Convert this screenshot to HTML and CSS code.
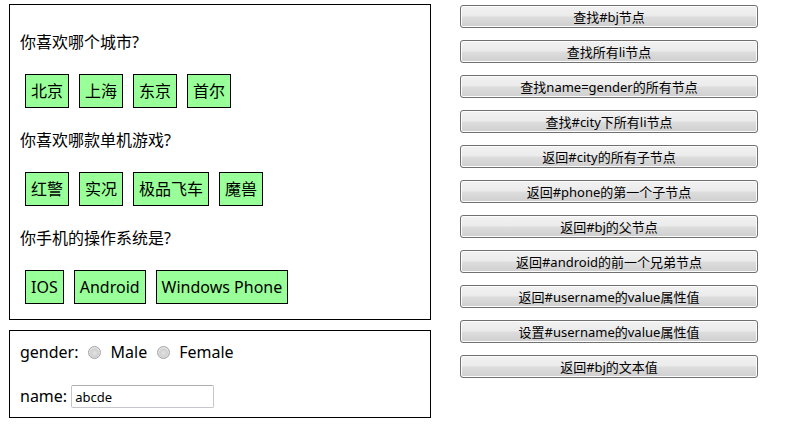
FILE: index.html
```html
<!DOCTYPE html>
<html lang="zh-CN">
<head>
<meta charset="utf-8">
<title>DOM 查询</title>
<link rel="stylesheet" href="styles.css">
</head>
<body>
<div class="page">
  <div class="total">
    <div class="inner">
      <p class="q">你喜欢哪个城市?</p>
      <ul class="opts">
        <li>北京</li>
        <li>上海</li>
        <li>东京</li>
        <li>首尔</li>
      </ul>
      <p class="q">你喜欢哪款单机游戏?</p>
      <ul class="opts">
        <li>红警</li>
        <li>实况</li>
        <li>极品飞车</li>
        <li>魔兽</li>
      </ul>
      <p class="q">你手机的操作系统是?</p>
      <ul class="opts">
        <li>IOS</li>
        <li>Android</li>
        <li>Windows Phone</li>
      </ul>
    </div>
    <div class="inner form">
      <div class="row">
        <span>gender:</span>
        <input class="radio" type="radio" name="gender" value="male">
        <span>Male</span>
        <input class="radio radio2" type="radio" name="gender" value="female">
        <span>Female</span>
      </div>
      <div class="row row-name">
        <span>name:</span>
        <input class="text" type="text" name="name" value="abcde">
      </div>
    </div>
  </div>
  <div class="btn-list">
    <button class="btn">查找#bj节点</button>
    <button class="btn">查找所有li节点</button>
    <button class="btn">查找name=gender的所有节点</button>
    <button class="btn">查找#city下所有li节点</button>
    <button class="btn">返回#city的所有子节点</button>
    <button class="btn">返回#phone的第一个子节点</button>
    <button class="btn">返回#bj的父节点</button>
    <button class="btn">返回#android的前一个兄弟节点</button>
    <button class="btn">返回#username的value属性值</button>
    <button class="btn">设置#username的value属性值</button>
    <button class="btn">返回#bj的文本值</button>
  </div>
</div>
</body>
</html>
```

FILE: styles.css
```css
html, body {
  margin: 0;
  padding: 0;
  background: #ffffff;
}
body {
  font-family: "Noto Sans", "Noto Sans CJK SC", sans-serif;
  font-size: 16px;
  line-height: 22px;
  color: #000000;
}
.page {
  display: flex;
  align-items: flex-start;
  padding: 4px 0 0 9px;
  gap: 29px;
}
.total {
  display: flex;
  flex-direction: column;
  gap: 10px;
  width: 422px;
}
.inner {
  width: 400px;
  border: 1px solid #000000;
  padding: 10px;
}
.q {
  margin: 16px 0;
  line-height: 22px;
}
.opts {
  list-style: none;
  margin: 16px 0;
  padding: 5px;
  display: flex;
  gap: 10px;
}
.opts:last-child {
  margin-bottom: 0;
}
.opts li {
  border: 1px solid #000000;
  padding: 5px;
  background-color: #99ff99;
  line-height: 22px;
}
.row {
  display: flex;
  align-items: center;
  height: 22px;
}
.row-name {
  margin-top: 22px;
  height: 22px;
}
.radio {
  appearance: none;
  -webkit-appearance: none;
  width: 13px;
  height: 13px;
  margin: 0 10px 0 9px;
  border-radius: 50%;
  border: 1px solid #a3a3a3;
  box-sizing: border-box;
  background: radial-gradient(circle at 50% 55%, #e4e4e4 0, #d0d0d0 45%, #ececec 75%, #f6f6f6 100%);
}
.radio2 {
  margin: 0 9px 0 10px;
}
.text {
  margin-left: 4px;
  width: 143px;
  height: 23px;
  box-sizing: border-box;
  border: 1px solid #c4c6cc;
  border-top-color: #abadb3;
  border-radius: 2px;
  padding: 1px 3px 0;
  font-family: "Noto Sans", "Noto Sans CJK SC", sans-serif;
  font-size: 13px;
  color: #000000;
  outline: none;
}
.btn-list {
  display: flex;
  flex-direction: column;
  gap: 12px;
  padding-top: 1px;
}
.btn {
  width: 298px;
  height: 23px;
  margin: 0;
  padding: 0 4px;
  box-sizing: border-box;
  border: 1px solid #707070;
  border-radius: 3px;
  box-shadow: inset 0 0 0 1px #fcfcfc;
  background: linear-gradient(to bottom, #f2f2f2 0%, #ebebeb 48%, #dddddd 52%, #cfcfcf 100%);
  font-family: "Noto Sans", "Noto Sans CJK SC", sans-serif;
  font-size: 13px;
  line-height: 20px;
  color: #000000;
  text-align: center;
}
```
